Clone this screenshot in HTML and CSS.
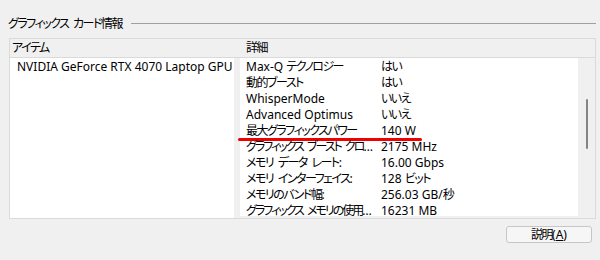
FILE: index.html
```html
<!DOCTYPE html>
<html lang="ja">
<head>
    <meta charset="UTF-8">
    <title>グラフィックス カード情報</title>
    <link rel="stylesheet" href="styles.css">
</head>
<body>
    <div class="group">
        <div class="legend">
            <span class="legend-title jp">グラフィックス カード情報</span>
            <span class="legend-line"></span>
        </div>
        <div class="list">
            <div class="list-head">
                <div class="col-item jp">アイテム</div>
                <div class="col-detail jp">詳細</div>
            </div>
            <div class="list-body">
                <div class="items">
                    <div class="item">NVIDIA GeForce RTX 4070 Laptop GPU</div>
                </div>
                <div class="details">
                    <div class="rows">
                        <div class="row"><span class="key">Max-Q <span class="jp">テクノロジー</span></span><span class="val jp">はい</span></div>
                        <div class="row"><span class="key jp">動的ブースト</span><span class="val jp">はい</span></div>
                        <div class="row"><span class="key">WhisperMode</span><span class="val jp">いいえ</span></div>
                        <div class="row"><span class="key">Advanced Optimus</span><span class="val jp">いいえ</span></div>
                        <div class="row marked"><span class="key jp">最大グラフィックスパワー</span><span class="val">140 W</span></div>
                        <div class="row"><span class="key jp cut">グラフィックス ブースト クロ…</span><span class="val">2175 MHz</span></div>
                        <div class="row"><span class="key jp">メモリ データ レート:</span><span class="val">16.00 Gbps</span></div>
                        <div class="row"><span class="key jp">メモリ インターフェイス:</span><span class="val">128 <span class="jp">ビット</span></span></div>
                        <div class="row"><span class="key jp">メモリのバンド幅:</span><span class="val">256.03 GB/<span class="jp">秒</span></span></div>
                        <div class="row"><span class="key jp cut">グラフィックス メモリの使用…</span><span class="val">16231 MB</span></div>
                    </div>
                    <div class="scrollbar"><span class="thumb"></span></div>
                </div>
            </div>
        </div>
        <div class="actions">
            <button class="btn"><span class="jp">説明</span>(<u>A</u>)</button>
        </div>
    </div>
</body>
</html>
```

FILE: styles.css
```css
body {
    margin: 0;
    background-color: #f0f0f0;
    font-family: "Noto Sans", "Noto Sans CJK JP", sans-serif;
    font-size: 12px;
    font-feature-settings: "palt";
    color: #000;
}
.jp {
    letter-spacing: -1.5px;
    word-spacing: 3px;
}
.group {
    padding: 15px 4px 0 9px;
}
.legend {
    display: flex;
    align-items: center;
    height: 16px;
    margin-left: -1px;
}
.legend-title {
    white-space: nowrap;
}
.legend-line {
    flex: 1;
    height: 1px;
    margin-left: 9px;
    background-color: #a0a0a0;
}
.list {
    margin-top: 7px;
    border: 1px solid #dadada;
}
.list-head {
    display: flex;
    height: 18px;
    line-height: 18px;
    border-bottom: 1px solid #dadada;
}
.col-item {
    width: 230px;
    padding-left: 2px;
}
.col-detail {
    padding-left: 4px;
}
.list-body {
    display: flex;
    height: 160px;
}
.items {
    width: 224px;
    background-color: #fff;
    margin-right: 6px;
}
.item {
    height: 16px;
    line-height: 16px;
    padding: 1px 0 0 7px;
    white-space: nowrap;
}
.details {
    flex: 1;
    display: flex;
}
.rows {
    flex: 1;
    background-color: #fff;
    padding-top: 1px;
    margin-bottom: 2px;
}
.row {
    display: flex;
    height: 16px;
    line-height: 16px;
    white-space: nowrap;
    position: relative;
}
.key {
    flex: none;
    width: 129px;
    padding: 0 6px 0 6px;
    overflow: hidden;
}
.cut {
    letter-spacing: -2px;
}
.marked::after {
    content: "";
    position: absolute;
    left: -2px;
    top: 15px;
    width: 184px;
    height: 3px;
    border-radius: 2px;
    background-color: #f00000;
}
.scrollbar {
    width: 17px;
    background-color: #f0f0f0;
    display: flex;
    justify-content: center;
}
.thumb {
    width: 2px;
    height: 50px;
    margin-top: 41px;
    background-color: #858585;
    border-radius: 1px;
}
.actions {
    display: flex;
    justify-content: flex-end;
    margin-top: 7px;
    padding-right: 4px;
}
.btn {
    width: 86px;
    height: 17px;
    padding: 0;
    font-family: inherit;
    font-size: 12px;
    font-feature-settings: "palt";
    line-height: 15px;
    background-color: #f6f6f6;
    border: 1px solid #c6c6c6;
    border-radius: 3px;
    color: #000;
}
```
